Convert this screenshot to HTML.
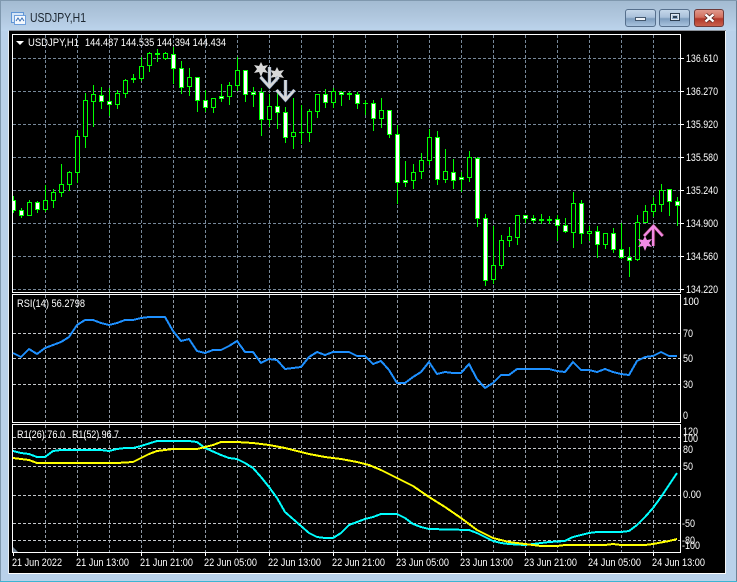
<!DOCTYPE html>
<html><head><meta charset="utf-8"><style>
html,body{margin:0;padding:0;width:737px;height:582px;overflow:hidden;background:#dfe8f0}
#w{position:absolute;left:0;top:0;width:737px;height:582px;background:#b9d1ea;overflow:hidden}
#tb{position:absolute;left:0;top:0;width:737px;height:31px;background:linear-gradient(#a3bbd2,#b2c9e0 60%,#bcd4ec);border-top:1px solid #7f98ae;box-sizing:border-box}
.b{position:absolute;top:9px;height:18px;box-sizing:border-box;border:1px solid #566f8c;border-radius:3px;background:linear-gradient(#c5d7ea,#a9c1da 45%,#7e9dbe 55%,#a8c3de)}
svg{position:absolute;left:0;top:0}
text{font-family:"Liberation Sans",sans-serif;font-size:11px;fill:#fff}
</style></head><body><div id="w">
<div id="tb"></div>
<div class="b" style="left:625px;width:31px"></div>
<div class="b" style="left:659px;width:31px"></div>
<div class="b" style="left:694px;width:30px;border-color:#6e3a3a;background:linear-gradient(#e0998c,#d2705f 45%,#b2382a 55%,#c9604c)"></div>
<svg width="737" height="582" viewBox="0 0 737 582">
<text x="30" y="22" textLength="56" lengthAdjust="spacingAndGlyphs" style="font-size:12.500px;fill:#1c2630">USDJPY,H1</text>
<!-- edges -->
<rect x="0" y="1" width="1" height="581" fill="#7f98ae"/><rect x="736" y="1" width="1" height="581" fill="#6c8296"/>
<rect x="0" y="581" width="737" height="1" fill="#3cb4d2"/>
<!-- app icon -->
<rect x="11.5" y="12.5" width="12" height="10" fill="#d6e6f8" stroke="#5f95d6"/>
<rect x="14.5" y="15.5" width="11" height="9" fill="#f4f8fd" stroke="#6fa0dc"/>
<path d="M16 21l2-3 2 3 2-3 2 3" fill="none" stroke="#3a6fb4"/>
<!-- window buttons glyphs -->
<rect x="635.5" y="17.5" width="10" height="3" fill="#eef3f8" stroke="#44586e"/>
<rect x="670.5" y="13.5" width="9" height="7" fill="none" stroke="#2e3f52"/><rect x="671.5" y="14.5" width="7" height="5" fill="none" stroke="#dfe8f2"/><rect x="673" y="16" width="4" height="2" fill="#2e3f52"/>
<path d="M705.5 14.5l8 7M713.5 14.5l-8 7" stroke="#5b2622" stroke-width="4"/><path d="M705.5 14.5l8 7M713.5 14.5l-8 7" stroke="#fff" stroke-width="2.4"/>
<!-- black client -->
<rect x="9" y="31" width="717" height="542" fill="#000"/>
<rect x="9" y="30" width="717" height="1" fill="#8a9099"/>
<rect x="8" y="31" width="1" height="543" fill="#e8eef4"/>
<rect x="9" y="573" width="717" height="1" fill="#fff"/>
<rect x="725" y="31" width="1" height="543" fill="#f4f6f8"/>
<!-- grid -->
<g shape-rendering="crispEdges" fill="none">
<path stroke="#778899" stroke-dasharray="3 2" d="M45.5 35V292M77.5 35V292M109.5 35V292M141.5 35V292M173.5 35V292M205.5 35V292M237.5 35V292M269.5 35V292M301.5 35V292M333.5 35V292M365.5 35V292M397.5 35V292M429.5 35V292M461.5 35V292M493.5 35V292M525.5 35V292M557.5 35V292M589.5 35V292M621.5 35V292M653.5 35V292"/>
<path stroke="#778899" stroke-dasharray="3 2" d="M13 58.5H680M13 91.5H680M13 124.5H680M13 157.5H680M13 190.5H680M13 223.5H680M13 256.5H680M13 289.5H680"/>
<path stroke="#8e98a4" stroke-dasharray="3 2" d="M45.5 295V422M77.5 295V422M109.5 295V422M141.5 295V422M173.5 295V422M205.5 295V422M237.5 295V422M269.5 295V422M301.5 295V422M333.5 295V422M365.5 295V422M397.5 295V422M429.5 295V422M461.5 295V422M493.5 295V422M525.5 295V422M557.5 295V422M589.5 295V422M621.5 295V422M653.5 295V422M45.5 425V552M77.5 425V552M109.5 425V552M141.5 425V552M173.5 425V552M205.5 425V552M237.5 425V552M269.5 425V552M301.5 425V552M333.5 425V552M365.5 425V552M397.5 425V552M429.5 425V552M461.5 425V552M493.5 425V552M525.5 425V552M557.5 425V552M589.5 425V552M621.5 425V552M653.5 425V552"/>
<path stroke="#c4c8cc" stroke-dasharray="3 2" d="M13 333.5H680M13 358.5H680M13 384.5H680M13 437.5H680M13 448.5H680M13 466.5H680M13 495.5H680M13 523.5H680M13 540.5H680"/>
<!-- pane borders -->
<path stroke="#fff" d="M12.5 34.5H680.5V292.5H12.5ZM12.5 294.5H680.5V422.5H12.5ZM12.5 424.5H680.5V552.5H12.5Z"/>
<!-- ticks -->
<path stroke="#fff" d="M681 58.5h3M681 91.5h3M681 124.5h3M681 157.5h3M681 190.5h3M681 223.5h3M681 256.5h3M681 289.5h3M13.5 553v3M77.5 553v3M141.5 553v3M205.5 553v3M269.5 553v3M333.5 553v3M397.5 553v3M461.5 553v3M525.5 553v3M589.5 553v3M653.5 553v3"/>
</g>
<path d="M13 547l5 5h-5z" fill="#6f8090"/>
<!-- candles -->
<g shape-rendering="crispEdges" stroke="#0f0" fill="none">
<path d="M13.5 196V213M21.5 208V218M29.5 200V216M37.5 201V213M45.5 185V212M53.5 189V208M61.5 164V197M69.5 171V191M77.5 130V183M85.5 93V148M93.5 85V127M101.5 87V109M109.5 88V116M117.5 90V109M125.5 79V98M133.5 74V83M141.5 57V81M149.5 52V72M157.5 49V62M165.5 52V60M173.5 47V84M181.5 61V94M189.5 68V96M197.5 77V112M205.5 90V112M213.5 98V113M221.5 84V102M229.5 82V105M237.5 57V91M245.5 70V102M253.5 87V107M261.5 88V136M269.5 94V127M277.5 93V129M285.5 107V143M293.5 98V149M301.5 105V144M309.5 109V142M317.5 94V118M325.5 89V108M333.5 88V108M341.5 91V106M349.5 92V100M357.5 92V109M365.5 100V115M373.5 100V131M381.5 98V128M389.5 110V138M397.5 125V204M405.5 161V187M413.5 164V189M421.5 153V179M429.5 129V165M437.5 131V185M445.5 149V183M453.5 159V189M461.5 172V192M469.5 151V182M477.5 157V227M485.5 214V286M493.5 226V284M501.5 235V269M509.5 227V247M517.5 215V245M525.5 215V223M533.5 215V223M541.5 214V224M549.5 216V224M557.5 215V241M565.5 218V233M573.5 192V248M581.5 200V244M589.5 226V241M597.5 226V258M605.5 233V249M613.5 228V253M621.5 223V259M629.5 247V277M637.5 215V261M645.5 205V223M653.5 197V217M661.5 184V212M669.5 189V216M677.5 197V226"/>
<path fill="#000" d="M27.500 202.500h4V215.500h-4zM43.500 200.500h4V209.500h-4zM51.500 192.500h4V200.500h-4zM59.500 184.500h4V192.500h-4zM67.500 172.500h4V184.500h-4zM75.500 136.500h4V172.500h-4zM83.500 100.500h4V136.500h-4zM91.500 94.500h4V101.500h-4zM115.500 93.500h4V104.500h-4zM123.500 80.500h4V93.500h-4zM139.500 66.500h4V78.500h-4zM147.500 53.500h4V65.500h-4zM163.500 53.500h4V58.500h-4zM187.500 77.500h4V86.500h-4zM211.500 98.500h4V107.500h-4zM227.500 85.500h4V96.500h-4zM235.500 70.500h4V85.500h-4zM267.500 106.500h4V119.500h-4zM291.500 132.500h4V136.500h-4zM307.500 111.500h4V132.500h-4zM315.500 94.500h4V111.500h-4zM331.500 91.500h4V102.500h-4zM379.500 110.500h4V118.500h-4zM411.500 172.500h4V180.500h-4zM419.500 160.500h4V171.500h-4zM427.500 137.500h4V160.500h-4zM443.500 171.500h4V179.500h-4zM467.500 157.500h4V177.500h-4zM491.500 265.500h4V279.500h-4zM499.500 240.500h4V265.500h-4zM507.500 236.500h4V240.500h-4zM515.500 215.500h4V237.500h-4zM571.500 203.500h4V232.500h-4zM587.500 231.500h4V233.500h-4zM603.500 233.500h4V244.500h-4zM635.500 222.500h4V259.500h-4zM643.500 211.500h4V222.500h-4zM651.500 204.500h4V211.500h-4zM659.500 190.500h4V204.500h-4z"/>
<path fill="#fff" d="M11.500 200.500h4V210.500h-4zM19.500 210.500h4V215.500h-4zM35.500 202.500h4V209.500h-4zM99.500 95.500h4V101.500h-4zM107.500 101.500h4V104.500h-4zM155.500 53.500h4V54.500h-4zM171.500 54.500h4V68.500h-4zM179.500 68.500h4V87.500h-4zM195.500 77.500h4V100.500h-4zM203.500 100.500h4V107.500h-4zM219.500 96.500h4V98.500h-4zM243.500 70.500h4V94.500h-4zM251.500 92.500h4V94.500h-4zM259.500 92.500h4V119.500h-4zM275.500 106.500h4V112.500h-4zM283.500 112.500h4V137.500h-4zM323.500 94.500h4V102.500h-4zM339.500 92.500h4V94.500h-4zM355.500 94.500h4V103.500h-4zM371.500 103.500h4V118.500h-4zM387.500 110.500h4V134.500h-4zM395.500 134.500h4V182.500h-4zM403.500 180.500h4V182.500h-4zM435.500 137.500h4V179.500h-4zM451.500 172.500h4V180.500h-4zM459.500 177.500h4V179.500h-4zM475.500 158.500h4V218.500h-4zM483.500 218.500h4V280.500h-4zM523.500 215.500h4V218.500h-4zM531.500 218.500h4V220.500h-4zM555.500 219.500h4V225.500h-4zM563.500 225.500h4V231.500h-4zM579.500 203.500h4V233.500h-4zM595.500 231.500h4V244.500h-4zM611.500 233.500h4V249.500h-4zM619.500 249.500h4V257.500h-4zM627.500 257.500h4V260.500h-4zM667.500 189.500h4V201.500h-4zM675.500 201.500h4V205.500h-4z"/>
<path stroke-width="2" d="M131 79h5M347 94h5M539 220h5M547 220h5"/>
<path d="M299 132.500h5M363 103.500h5"/>
</g>
<rect x="9" y="196" width="3" height="20" fill="#000"/><rect x="12" y="196" width="1" height="20" fill="#fff"/>
<!-- signals -->
<g fill="none" stroke-linejoin="miter">
<path d="M261 62l2 4 5-1-3 4 3 4-5-1-2 5-2-5-5 1 3-4-3-4 5 1z" fill="#d8d8d8"/>
<path d="M277 67l2 4 5-1-3 4 3 4-5-1-2 5-2-5-5 1 3-4-3-4 5 1z" fill="#d8d8d8"/>
<path d="M269.500 67V86M260.500 77l9 10 9-10" stroke="#7f9ac0" stroke-width="3.400"/>
<path d="M269.500 67V86M260.500 77l9 10 9-10" stroke="#d8d8d8" stroke-width="2.400"/>
<path d="M285.500 80V99M276.500 90l9 10 9-10" stroke="#7f9ac0" stroke-width="3.400"/>
<path d="M285.500 80V99M276.500 90l9 10 9-10" stroke="#d8d8d8" stroke-width="2.400"/>
<path d="M653.500 246V227M644 236l9.500-10 9.500 10" stroke="#8a3a5a" stroke-width="3.200"/>
<path d="M653 246V227M644 236l9.500-10 9 10" stroke="#f28ae6" stroke-width="2.300"/>
<path d="M645 236l2 4 5-1-3 4 3 4-5-1-2 5-2-5-5 1 3-4-3-4 5 1z" fill="#f28ae6"/>
</g>
<!-- RSI -->
<polyline fill="none" stroke="#1e90ff" stroke-width="2" shape-rendering="crispEdges" points="13,353 21,357 29,349 37,354 45,348 53,345 61,342 69,337 77,325 85,320 93,320 101,323 109,325 117,323 125,320 133,320 141,318 149,317 157,317 165,317 173,331 181,341 189,339 197,351 205,353 213,350 221,350 229,346 237,341 245,352 253,352 261,363 269,359 277,360 285,369 293,368 301,367 309,357 317,352 325,355 333,352 341,352 349,352 357,356 365,356 373,364 381,361 389,370 397,383 405,383 413,377 421,372 429,362 437,374 445,372 453,373 461,373 469,364 477,379 485,388 493,383 501,375 509,375 517,369 549,369 557,371 565,372 573,362 581,370 589,370 597,372 605,369 613,372 621,374 629,375 637,361 645,357 653,356 661,352 669,356 677,356"/>
<!-- R1 yellow & cyan -->
<polyline fill="none" stroke="#00ffff" stroke-width="2" shape-rendering="crispEdges" points="13,451 21,453 29,454 37,457 45,457 53,451 61,450 77,450 101,450 109,451 117,449 125,448 133,448 141,446 157,441 165,441 189,441 197,442 205,448 221,455 229,458 237,459 245,463 253,468 261,477 269,487 277,498 285,512 293,519 301,526 309,533 317,537 325,538 333,538 341,533 349,525 357,522 365,519 373,517 381,514 397,514 405,518 413,524 421,527 429,529 469,530 477,533 485,537 493,541 501,543 509,544 525,545 533,544 549,542 565,541 573,537 589,533 597,532 621,532 629,531 637,525 645,517 653,508 661,497 669,485 677,473"/>
<polyline fill="none" stroke="#ffff00" stroke-width="2" shape-rendering="crispEdges" points="13,458 21,459 29,460 37,463 117,463 133,462 141,458 149,454 157,451 173,449 197,449 205,447 213,445 221,442 237,442 253,443 269,445 285,448 301,452 309,454 325,457 341,459 357,462 369,465 381,470 397,478 413,486 429,497 445,507 461,518 477,530 493,538 509,542 525,544 541,546 557,546 565,545 605,545 613,544 621,545 645,545 653,544 669,541 677,539"/>
<!-- labels -->
<path d="M16 41h8l-4 4z" fill="#fff"/>
<g>
<text x="28" y="46" textLength="51" lengthAdjust="spacingAndGlyphs">USDJPY,H1</text>
<text x="85" y="46" textLength="141" lengthAdjust="spacingAndGlyphs">144.487 144.535 144.394 144.434</text>
<text x="17" y="307" textLength="68" lengthAdjust="spacingAndGlyphs">RSI(14) 56.2798</text>
<text x="17" y="438" textLength="48" lengthAdjust="spacingAndGlyphs">R1(26) 76.0</text>
<text x="72" y="438" textLength="47" lengthAdjust="spacingAndGlyphs">R1(52) 96.7</text>
<text x="686" y="62" textLength="32" lengthAdjust="spacingAndGlyphs">136.610</text><text x="686" y="95" textLength="32" lengthAdjust="spacingAndGlyphs">136.270</text><text x="686" y="128" textLength="32" lengthAdjust="spacingAndGlyphs">135.920</text><text x="686" y="161" textLength="32" lengthAdjust="spacingAndGlyphs">135.580</text><text x="686" y="194" textLength="32" lengthAdjust="spacingAndGlyphs">135.240</text><text x="686" y="227" textLength="32" lengthAdjust="spacingAndGlyphs">134.900</text><text x="686" y="260" textLength="32" lengthAdjust="spacingAndGlyphs">134.560</text><text x="686" y="293" textLength="32" lengthAdjust="spacingAndGlyphs">134.220</text>
<text x="683" y="305" textLength="16" lengthAdjust="spacingAndGlyphs">100</text><text x="683" y="337" textLength="10" lengthAdjust="spacingAndGlyphs">70</text><text x="683" y="362" textLength="10" lengthAdjust="spacingAndGlyphs">50</text><text x="683" y="388" textLength="10" lengthAdjust="spacingAndGlyphs">30</text><text x="683" y="419" textLength="5" lengthAdjust="spacingAndGlyphs">0</text>
<text x="683" y="435" textLength="15" lengthAdjust="spacingAndGlyphs">120</text><text x="683" y="442" textLength="15" lengthAdjust="spacingAndGlyphs">100</text><text x="683" y="453" textLength="10" lengthAdjust="spacingAndGlyphs">80</text><text x="683" y="470" textLength="10" lengthAdjust="spacingAndGlyphs">50</text><text x="683" y="498" textLength="18" lengthAdjust="spacingAndGlyphs">0.00</text><text x="682" y="527" textLength="13" lengthAdjust="spacingAndGlyphs">-50</text><text x="682" y="544" textLength="13" lengthAdjust="spacingAndGlyphs">-80</text><text x="682" y="549" textLength="18" lengthAdjust="spacingAndGlyphs">-100</text>
<text x="12" y="566" textLength="50" lengthAdjust="spacingAndGlyphs">21 Jun 2022</text><text x="76" y="566" textLength="53" lengthAdjust="spacingAndGlyphs">21 Jun 13:00</text><text x="140" y="566" textLength="53" lengthAdjust="spacingAndGlyphs">21 Jun 21:00</text><text x="204" y="566" textLength="53" lengthAdjust="spacingAndGlyphs">22 Jun 05:00</text><text x="268" y="566" textLength="53" lengthAdjust="spacingAndGlyphs">22 Jun 13:00</text><text x="332" y="566" textLength="53" lengthAdjust="spacingAndGlyphs">22 Jun 21:00</text><text x="396" y="566" textLength="53" lengthAdjust="spacingAndGlyphs">23 Jun 05:00</text><text x="460" y="566" textLength="53" lengthAdjust="spacingAndGlyphs">23 Jun 13:00</text><text x="524" y="566" textLength="53" lengthAdjust="spacingAndGlyphs">23 Jun 21:00</text><text x="588" y="566" textLength="53" lengthAdjust="spacingAndGlyphs">24 Jun 05:00</text><text x="652" y="566" textLength="53" lengthAdjust="spacingAndGlyphs">24 Jun 13:00</text>
</g>
</svg>
</div></body></html>
